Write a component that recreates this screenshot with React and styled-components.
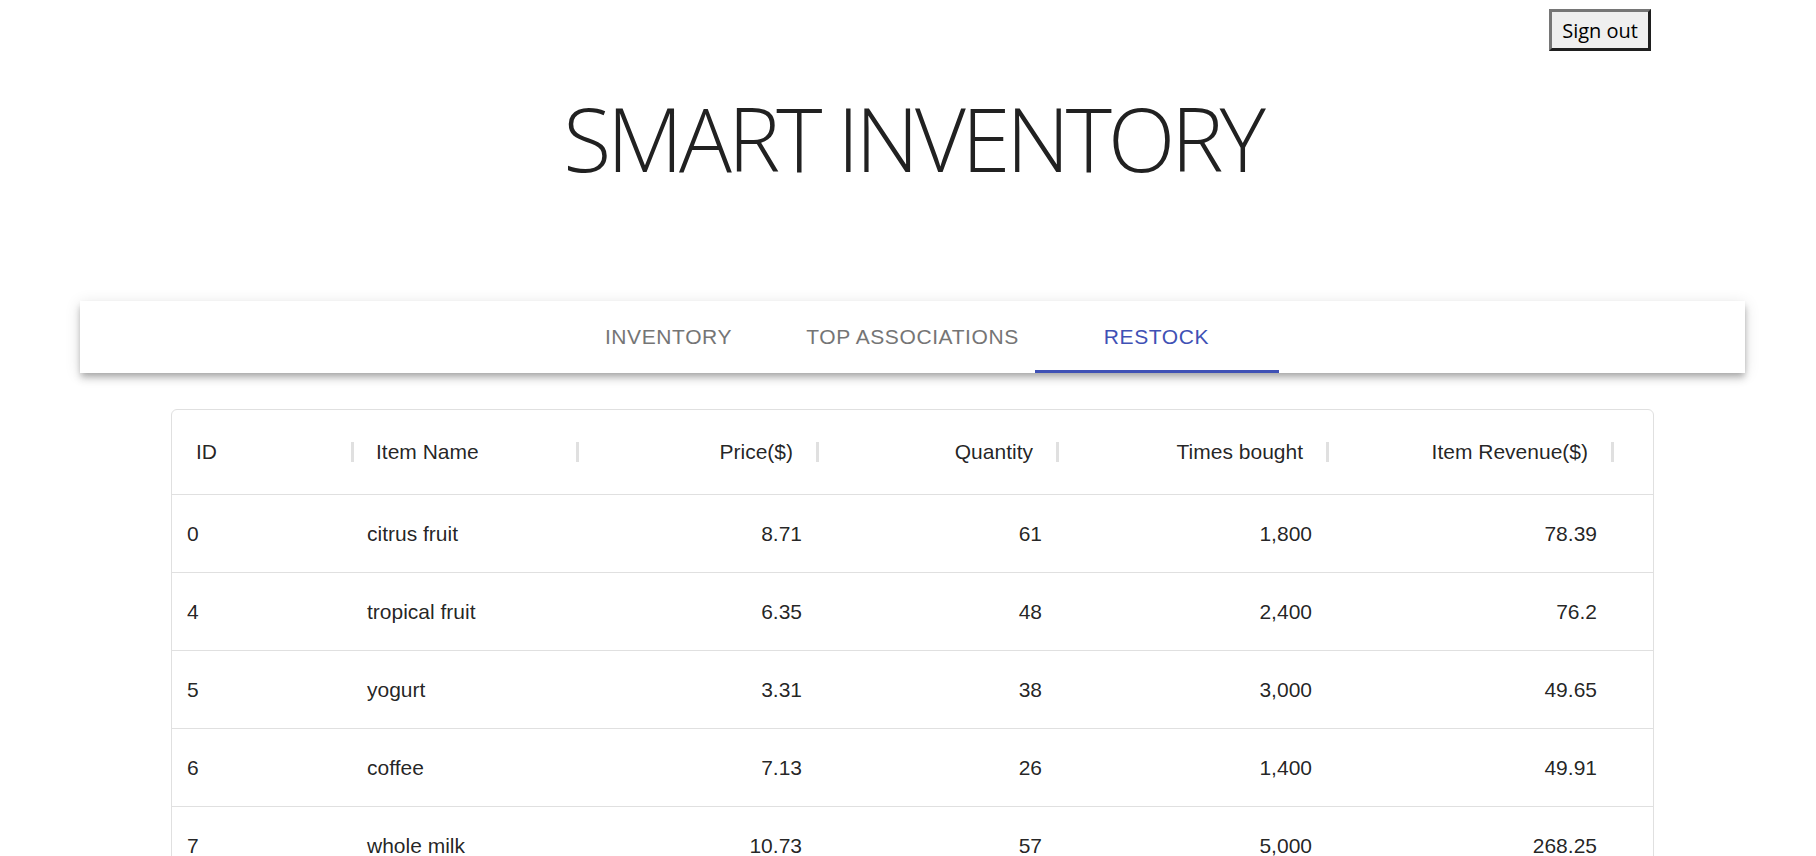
import React from "react";
import styled, { createGlobalStyle } from "styled-components";

const GlobalStyle = createGlobalStyle`
  html, body {
    margin: 0;
    padding: 0;
    background: #ffffff;
    overflow: hidden;
  }
  body {
    font-family: "Liberation Sans", Arial, sans-serif;
  }
`;

const Page = styled.div`
  padding-left: 9px;
  display: flex;
  flex-direction: column;
`;

const TopBar = styled.div`
  display: flex;
  justify-content: flex-end;
  padding: 9px 165px 0 0;
`;

const SignOutButton = styled.button`
  box-sizing: border-box;
  height: 42px;
  padding: 0 10px;
  font-family: "Open Sans", "Noto Sans", sans-serif;
  font-size: 20px;
  color: #000;
  background: #efefef;
  border-style: solid;
  border-width: 3px;
  border-color: #767676 #1f1f1f #1f1f1f #767676;
  cursor: pointer;
`;

const Title = styled.h1`
  margin: 43px 0 0;
  text-align: center;
  font-family: "Open Sans", "Noto Sans", sans-serif;
  font-weight: 300;
  font-size: 88px;
  line-height: 1;
  color: #212121;
  letter-spacing: -4px;
`;

const TabBar = styled.nav`
  box-sizing: border-box;
  width: 1665px;
  height: 72px;
  margin: 119px auto 0;
  background: #fff;
  display: flex;
  justify-content: center;
  box-shadow: 0 3px 6px -1.5px rgba(0, 0, 0, 0.2),
    0 6px 7.5px 0 rgba(0, 0, 0, 0.14), 0 1.5px 15px 0 rgba(0, 0, 0, 0.12);
`;

const Tab = styled.div`
  position: relative;
  width: 244px;
  display: flex;
  align-items: center;
  justify-content: center;
  font-family: "Liberation Sans", Arial, sans-serif;
  font-size: 21px;
  letter-spacing: 0.6px;
  text-transform: uppercase;
  color: ${(p) => (p.$active ? "#3f51b5" : "#757575")};
  &::after {
    content: "";
    position: absolute;
    left: 0;
    right: 0;
    bottom: 0;
    height: 3px;
    background: ${(p) => (p.$active ? "#3f51b5" : "transparent")};
  }
`;

const Grid = styled.div`
  box-sizing: border-box;
  width: 1483px;
  margin: 36px auto 0;
  border: 1px solid #e0e0e0;
  border-radius: 6px;
  font-family: "Liberation Sans", Arial, sans-serif;
  font-size: 21px;
  color: rgba(0, 0, 0, 0.87);
`;

const HeaderRow = styled.div`
  display: flex;
  height: 84px;
  border-bottom: 1px solid #e0e0e0;
`;

const HeaderCell = styled.div`
  position: relative;
  box-sizing: border-box;
  width: ${(p) => p.$w}px;
  flex: none;
  display: flex;
  align-items: center;
  justify-content: ${(p) => (p.$right ? "flex-end" : "flex-start")};
  padding: 0 24px;
`;

const Separator = styled.span`
  position: absolute;
  right: -1.5px;
  top: 32px;
  width: 3px;
  height: 20px;
  background: #e0e0e0;
`;

const Row = styled.div`
  display: flex;
  height: 77px;
  border-bottom: 1px solid #e0e0e0;
`;

const Cell = styled.div`
  box-sizing: border-box;
  width: ${(p) => p.$w}px;
  flex: none;
  display: flex;
  align-items: center;
  justify-content: ${(p) => (p.$right ? "flex-end" : "flex-start")};
  padding: 0 15px;
`;

const columns = [
  { key: "id", label: "ID", w: 180 },
  { key: "name", label: "Item Name", w: 225 },
  { key: "price", label: "Price($)", w: 240, right: true },
  { key: "qty", label: "Quantity", w: 240, right: true },
  { key: "times", label: "Times bought", w: 270, right: true },
  { key: "rev", label: "Item Revenue($)", w: 285, right: true },
];

const rows = [
  { id: "0", name: "citrus fruit", price: "8.71", qty: "61", times: "1,800", rev: "78.39" },
  { id: "4", name: "tropical fruit", price: "6.35", qty: "48", times: "2,400", rev: "76.2" },
  { id: "5", name: "yogurt", price: "3.31", qty: "38", times: "3,000", rev: "49.65" },
  { id: "6", name: "coffee", price: "7.13", qty: "26", times: "1,400", rev: "49.91" },
  { id: "7", name: "whole milk", price: "10.73", qty: "57", times: "5,000", rev: "268.25" },
];

export default function App() {
  return (
    <>
      <GlobalStyle />
      <Page>
        <TopBar>
          <SignOutButton>Sign out</SignOutButton>
        </TopBar>
        <Title>SMART INVENTORY</Title>
        <TabBar>
          <Tab>Inventory</Tab>
          <Tab>Top Associations</Tab>
          <Tab $active>Restock</Tab>
        </TabBar>
        <Grid>
          <HeaderRow>
            {columns.map((c) => (
              <HeaderCell key={c.key} $w={c.w} $right={c.right}>
                {c.label}
                <Separator />
              </HeaderCell>
            ))}
          </HeaderRow>
          {rows.map((r) => (
            <Row key={r.id}>
              {columns.map((c) => (
                <Cell key={c.key} $w={c.w} $right={c.right}>
                  {r[c.key]}
                </Cell>
              ))}
            </Row>
          ))}
        </Grid>
      </Page>
    </>
  );
}
